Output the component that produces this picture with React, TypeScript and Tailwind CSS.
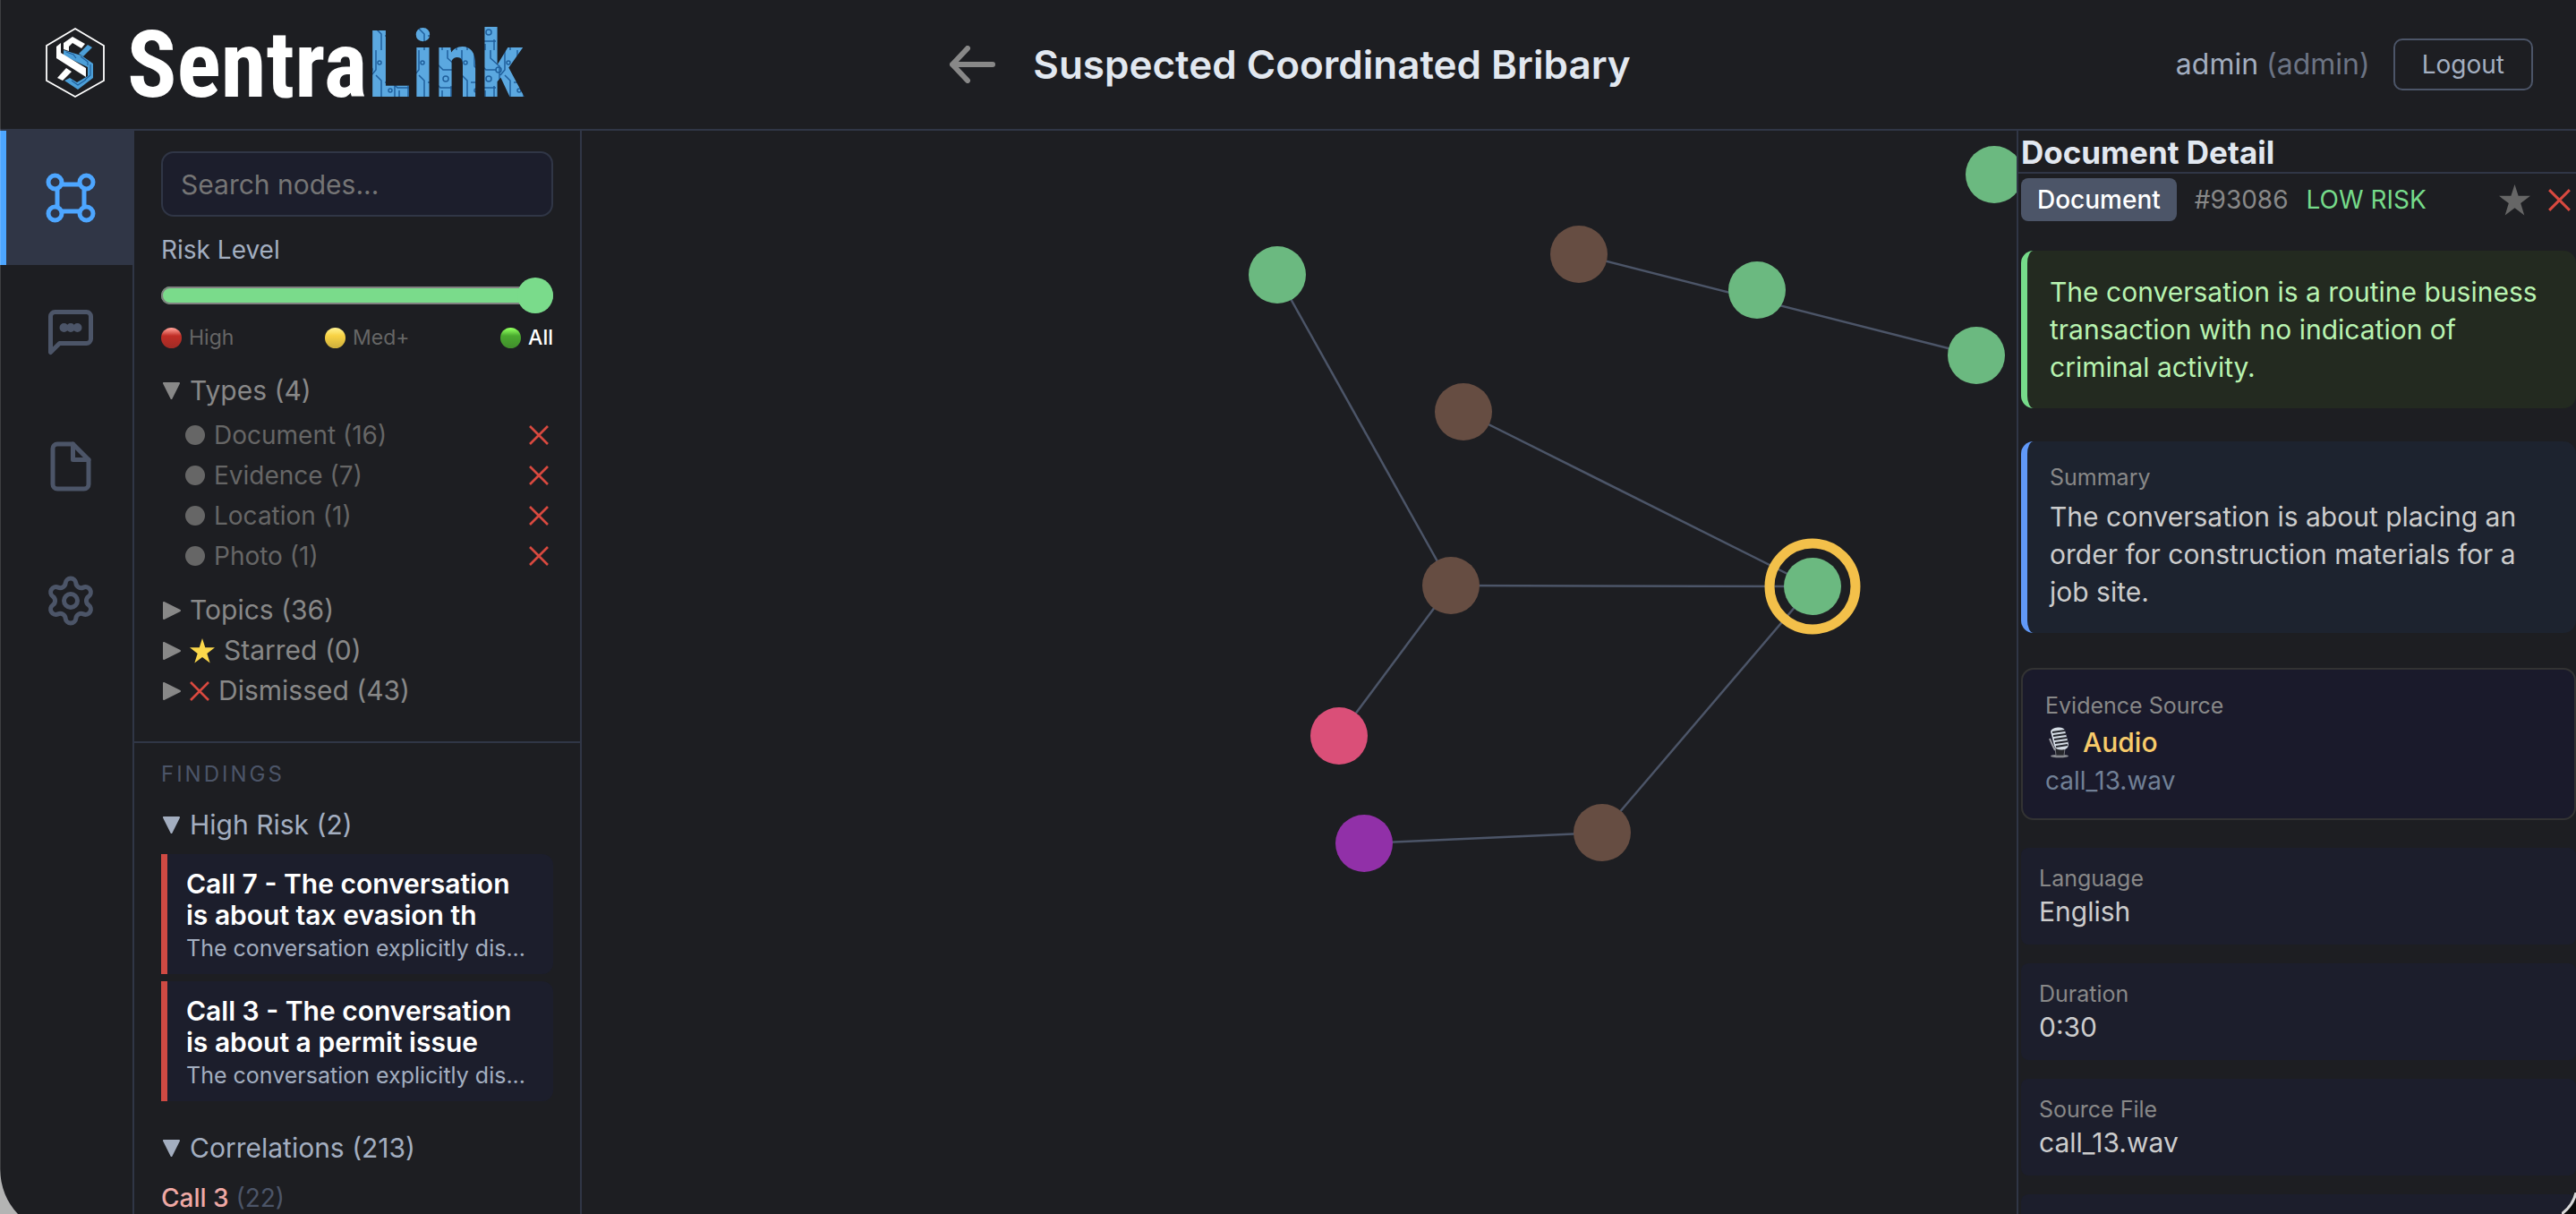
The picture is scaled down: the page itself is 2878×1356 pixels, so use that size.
import React, { useState } from "react";
import { Settings } from "lucide-react";

const NODE_COLORS = {
  document: "#6bb980",
  evidence: "#664d42",
  location: "#da4f78",
  photo: "#9130a8",
};

interface GraphNode {
  id: string;
  x: number;
  y: number;
  kind: keyof typeof NODE_COLORS;
}

const nodes: GraphNode[] = [
  { id: "d1", x: 777, y: 161, kind: "document" },
  { id: "d2", x: 1313, y: 178, kind: "document" },
  { id: "d3", x: 1558, y: 251, kind: "document" },
  { id: "d4", x: 1578, y: 49, kind: "document" },
  { id: "d5", x: 1375, y: 509, kind: "document" },
  { id: "e1", x: 1114, y: 138, kind: "evidence" },
  { id: "e2", x: 985, y: 314, kind: "evidence" },
  { id: "e3", x: 971, y: 508, kind: "evidence" },
  { id: "e4", x: 1140, y: 784, kind: "evidence" },
  { id: "l1", x: 846, y: 676, kind: "location" },
  { id: "p1", x: 874, y: 796, kind: "photo" },
];

const links = [
  ["d1", "e3"],
  ["e1", "d3"],
  ["e2", "d5"],
  ["e3", "d5"],
  ["e3", "l1"],
  ["e4", "d5"],
  ["p1", "e4"],
];

const types = [
  { name: "Document", count: 16 },
  { name: "Evidence", count: 7 },
  { name: "Location", count: 1 },
  { name: "Photo", count: 1 },
];

const findings = [
  {
    title: "Call 7 - The conversation is about tax evasion th",
    text: "The conversation explicitly dis...",
  },
  {
    title: "Call 3 - The conversation is about a permit issue",
    text: "The conversation explicitly dis...",
  },
];

const fields = [
  { label: "Language", value: "English" },
  { label: "Duration", value: "0:30" },
  { label: "Source File", value: "call_13.wav" },
];

function Logo() {
  return (
    <div className="flex items-center pb-1 pl-0.5">
      <svg className="h-[80px] w-[68px]" viewBox="0 0 68 80" fill="none">
        <path d="M34 2 66 21v39L34 78 2 60V21z" stroke="#fff" strokeWidth="1.800" />
        <path d="M21 25v-7l10-7 14 8-4 5-10-6-4 4v5z" fill="#fff" />
        <path d="M38 30l10-10 5 3-10 10z" fill="#4c9fd8" />
        <path d="M21 26l20 6 13 9v16L37 70 22 60l6-3 8 5 12-7V45L21 32z" fill="#4c9fd8" />
        <path d="M24 28l8 3 3 4M40 33l8 6v4M51 42v12l-6 5M30 60l7 5 9-6" stroke="#1f5f9c" strokeWidth="1.200" />
        <path d="M13 22l5-4v11l28 17v10L13 35z" fill="#fff" />
        <path d="M14 57l10-11 6 4-10 10z" fill="#fff" />
      </svg>
      <svg className="ml-6 h-[132px] w-[456px]" viewBox="0 0 456 132">
        <defs>
          <pattern id="circuit" width="48" height="52" patternUnits="userSpaceOnUse">
            <rect width="48" height="52" fill="#5ba8e0" />
            <g fill="none" stroke="#1f5f9c" strokeWidth="1.5">
              <path d="M4 0v18l7 7v27M9 0v14l8 8h12M22 0v9l10 9v34M38 0v22l-5 6M0 36h8l6 6h14M44 52V34l-6-6M26 52V40M16 52v-7" />
              <circle cx="31" cy="22" r="3" />
              <circle cx="20" cy="32" r="3" />
              <circle cx="42" cy="14" r="2" />
              <circle cx="6" cy="45" r="2" />
            </g>
          </pattern>
        </defs>
        <text
          x="0"
          y="104"
          fontSize="103"
          className="font-['Liberation_Sans_Narrow','Roboto_Condensed','Liberation_Sans',sans-serif] font-bold"
          fill="#fff"
        >
          Sentra<tspan fill="url(#circuit)">Link</tspan>
        </text>
      </svg>
    </div>
  );
}

function CrossIcon({ className }: { className: string }) {
  return (
    <svg className={className} viewBox="0 0 22 22" fill="none" stroke="#d9493f" strokeWidth="2.6">
      <path d="M1 1l20 20M21 1L1 21" />
    </svg>
  );
}

function StarIcon({ className }: { className: string }) {
  return (
    <svg className={className} viewBox="0 0 34 34" fill="currentColor">
      <path d="M17 0l4 12.5h13L23.500 20.500 27.500 33.500 17 25.500 6.500 33.500 10.500 20.500 0 12.500h13z" />
    </svg>
  );
}

function Ball({ id, top, bottom }: { id: string; top: string; bottom: string }) {
  return (
    <svg className="size-[23px]" viewBox="0 0 24 24">
      <defs>
        <linearGradient id={id} x1="0" y1="0" x2="0" y2="1">
          <stop offset="0.05" stopColor={top} />
          <stop offset="0.4" stopColor={bottom} />
          <stop offset="1" stopColor={bottom} stopOpacity="0.8" />
        </linearGradient>
      </defs>
      <circle cx="12" cy="12" r="12" fill={`url(#${id})`} />
    </svg>
  );
}

interface ToggleProps {
  label: string;
  open?: boolean;
  icon?: React.ReactNode;
  className?: string;
}

function Toggle({ label, open, icon, className = "text-[#888888]" }: ToggleProps) {
  return (
    <button className={`flex h-[45px] w-full items-center text-[30px] ${className}`}>
      <svg
        className="mr-2.5 ml-0.5 size-5"
        viewBox="0 0 20 20"
        fill="currentColor"
        stroke="currentColor"
        strokeWidth="2"
        strokeLinejoin="round"
      >
        {open ? <path d="M1 1h17l-8.500 17z" /> : <path d="M1 1v18l18-9z" />}
      </svg>
      {icon}
      {label}
    </button>
  );
}

interface NavButtonProps {
  label: string;
  active?: boolean;
  children: React.ReactNode;
}

function NavButton({ label, active, children }: NavButtonProps) {
  return (
    <button
      aria-label={label}
      className={`flex h-[150px] items-center justify-center border-l-[7px] ${
        active
          ? "-mr-0.5 border-[#4da6ff] bg-[#303646] text-[#4da6ff]"
          : "border-transparent pl-0.5 text-[#4c5568]"
      }`}
    >
      {children}
    </button>
  );
}

function NavIcon({ children }: { children: React.ReactNode }) {
  return (
    <svg
      className="size-[60px]"
      viewBox="0 0 24 24"
      fill="none"
      stroke="currentColor"
      strokeWidth="2"
      strokeLinecap="round"
      strokeLinejoin="round"
    >
      {children}
    </svg>
  );
}

function Sidebar() {
  return (
    <nav className="flex w-[150px] shrink-0 flex-col border-r-2 border-[#303646]">
      <NavButton label="Graph" active>
        <NavIcon>
          <circle cx="5" cy="5" r="3" />
          <circle cx="19" cy="5" r="3" />
          <circle cx="5" cy="19" r="3" />
          <circle cx="19" cy="19" r="3" />
          <path d="M8 6h8M8 18h8M6 8v8M18 8v8" />
        </NavIcon>
      </NavButton>
      <NavButton label="Chat">
        <NavIcon>
          <path d="M21 15a2 2 0 0 1-2 2H7l-4 4V5a2 2 0 0 1 2-2h14a2 2 0 0 1 2 2z" />
          <circle cx="9" cy="10" r="1" />
          <circle cx="12" cy="10" r="1" />
          <circle cx="15" cy="10" r="1" />
        </NavIcon>
      </NavButton>
      <NavButton label="Files">
        <NavIcon>
          <path d="M13 2H6a2 2 0 0 0-2 2v16a2 2 0 0 0 2 2h12a2 2 0 0 0 2-2V9z" />
          <path d="M13 2v7h7" />
        </NavIcon>
      </NavButton>
      <NavButton label="Settings">
        <Settings className="size-[60px]" />
      </NavButton>
    </nav>
  );
}

function FilterPanel() {
  const [search, setSearch] = useState("");
  const [risk, setRisk] = useState(2);

  return (
    <aside className="flex w-[500px] shrink-0 flex-col border-r-2 border-[#303646]">
      <div className="border-b-2 border-[#303646] px-[30px] pt-[23px] pb-[34px]">
        <input
          type="text"
          aria-label="Search nodes"
          placeholder="Search nodes..."
          value={search}
          onChange={(e) => setSearch(e.target.value)}
          className="h-[73px] w-full rounded-[14px] border-2 border-[#303646] bg-[#1c1e2c] px-5 text-[30px] text-gray-200 placeholder:text-[#757575]"
        />
        <label htmlFor="risk" className="mt-5 block text-[28px] leading-[34px] text-[#a3aec0]">
          Risk Level
        </label>
        <input
          id="risk"
          type="range"
          min={0}
          max={2}
          value={risk}
          onChange={(e) => setRisk(Number(e.target.value))}
          className="mt-6 block h-5 w-full appearance-none rounded-full bg-[#7adb8b] ring-2 ring-[#808080] ring-inset [&::-webkit-slider-thumb]:size-10 [&::-webkit-slider-thumb]:appearance-none [&::-webkit-slider-thumb]:rounded-full [&::-webkit-slider-thumb]:bg-[#7adb8b]"
        />
        <div className="mt-[22px] flex justify-between text-[23px] leading-[30px] text-[#666666]">
          <span className="flex items-center gap-2">
            <Ball id="red" top="#ff9a90" bottom="#c02e26" />
            High
          </span>
          <span className="flex items-center gap-2">
            <Ball id="yellow" top="#fff08a" bottom="#f8d243" />
            Med+
          </span>
          <span className="flex items-center gap-2 font-medium text-white">
            <Ball id="green" top="#8dff5c" bottom="#4aa92f" />
            All
          </span>
        </div>

        <div className="mt-[22px]">
          <Toggle label="Types (4)" open />
          <ul className="mt-1 mb-4 pr-[5px] pl-[27px] text-[28px] text-[#666666]">
            {types.map((type) => (
              <li key={type.name} className="flex h-[45px] items-center justify-between">
                <button className="flex items-center gap-2.5">
                  <span className="size-[22px] rounded-full bg-[#666666]" />
                  {type.name} ({type.count})
                </button>
                <button aria-label={`Hide ${type.name}`}>
                  <CrossIcon className="size-[22px]" />
                </button>
              </li>
            ))}
          </ul>
          <Toggle label="Topics (36)" />
          <Toggle
            label="Starred (0)"
            icon={<StarIcon className="mr-2.5 size-7 text-[#fbd84b]" />}
          />
          <Toggle label="Dismissed (43)" icon={<CrossIcon className="mr-2.5 size-[22px]" />} />
        </div>
      </div>

      <div className="px-[30px] pt-5">
        <h2 className="text-[24px] leading-[30px] tracking-[3px] text-[#4c5568]">FINDINGS</h2>
        <div className="mt-[19px]">
          <Toggle label="High Risk (2)" open className="text-[#a3aec0]" />
        </div>
        <div className="mt-2.5 flex flex-col gap-2">
          {findings.map((finding) => (
            <button
              key={finding.title}
              className="rounded-r-xl border-l-[7px] border-[#d04a43] bg-[#1c1e2c] pt-4 pr-6 pb-3.5 pl-[21px] text-left"
            >
              <span className="block text-[30px] leading-[35px] font-semibold text-white">
                {finding.title}
              </span>
              <span className="mt-1 block text-[25px] leading-[30px] whitespace-nowrap text-[#a3aec0]">
                {finding.text}
              </span>
            </button>
          ))}
        </div>
        <div className="mt-[30px]">
          <Toggle label="Correlations (213)" open className="text-[#a3aec0]" />
        </div>
        <p className="mt-4 text-[28px] leading-[34px] text-[#4c5568]">
          <span className="font-medium text-[#efa9a5]">Call 3</span> (22)
        </p>
      </div>
    </aside>
  );
}

function Graph() {
  const byId = (id: string) => nodes.find((n) => n.id === id)!;
  const selected = byId("d5");

  return (
    <main className="min-w-0 flex-1">
      <svg className="h-full w-full">
        {links.map(([from, to]) => (
          <line
            key={from + to}
            x1={byId(from).x}
            y1={byId(from).y}
            x2={byId(to).x}
            y2={byId(to).y}
            stroke="#4c5568"
            strokeWidth="2.500"
          />
        ))}
        <circle cx={selected.x} cy={selected.y} r="48" fill="none" stroke="#f3c04a" strokeWidth="11" />
        {nodes.map((n) => (
          <circle key={n.id} cx={n.x} cy={n.y} r="32" fill={NODE_COLORS[n.kind]} />
        ))}
      </svg>
    </main>
  );
}

function MicIcon() {
  return (
    <svg className="h-[36px] w-[32px]" viewBox="0 0 32 36" fill="none">
      <ellipse cx="16" cy="33.500" rx="10" ry="1.800" fill="#8a8c92" />
      <path d="M11 24l11 1-1 8h-9z" fill="#26272c" stroke="#77797f" />
      <path d="M6 6Q7 2 14 1.500 21 1 22 5l4 15q0 6-7 6.500T10 22z" fill="#d4dbe4" />
      <path d="M8 7l14-2M9 11l14-2M10 15l14-2M11 19l14-2M12 23l13-2" stroke="#23252c" strokeWidth="1.800" />
      <path d="M5 14l3 7 3 6" stroke="#9a9ca4" strokeWidth="2" />
    </svg>
  );
}

function DetailPanel() {
  return (
    <aside className="flex w-[625px] shrink-0 flex-col border-l-2 border-[#303646]">
      <h2 className="border-b-2 border-[#303646] pt-0.5 pl-[3px] text-[35px] leading-[44px] font-bold text-[#e2e8f0]">
        Document Detail
      </h2>
      <div className="pl-[3px]">
        <div className="mt-[5px] flex h-12 items-center text-[28px]">
          <span className="flex h-12 items-center rounded-lg bg-[#4c5568] px-[18px] font-medium text-white">
            Document
          </span>
          <span className="ml-5 text-[#888888]">#93086</span>
          <span className="ml-5 text-[#76db8a]">LOW RISK</span>
          <button aria-label="Star" className="ml-auto text-[#666666]">
            <StarIcon className="size-[35px]" />
          </button>
          <button aria-label="Dismiss" className="mr-1.5 ml-5">
            <CrossIcon className="size-[25px]" />
          </button>
        </div>

        <p className="mt-[33px] rounded-[14px] border-l-[7px] border-[#76db8a] bg-[#232a20] p-[25px] text-[30px] leading-[42px] text-[#b8f3b0]">
          The conversation is a routine business transaction with no indication of criminal activity.
        </p>

        <div className="mt-[37px] rounded-[14px] border-l-[7px] border-[#6199f8] bg-[#1d232f] p-[25px]">
          <h3 className="text-[25px] leading-[30px] text-[#888888]">Summary</h3>
          <p className="mt-2 text-[30px] leading-[42px] text-[#cccccc]">
            The conversation is about placing an order for construction materials for a job site.
          </p>
        </div>

        <div className="mt-[39px] rounded-[14px] border-2 border-[#333333] bg-[#1a1a2b] p-[25px]">
          <h3 className="text-[25px] leading-[30px] text-[#888888]">Evidence Source</h3>
          <p className="mt-2 flex items-center gap-2.5 text-[30px] leading-9 font-medium text-[#f8cb6a]">
            <MicIcon />
            Audio
          </p>
          <p className="mt-2 text-[28px] leading-[34px] text-[#718096]">call_13.wav</p>
        </div>

        <dl className="mt-[31px] flex flex-col gap-[21px]">
          {fields.map((field) => (
            <div key={field.label} className="rounded-lg bg-[#1c1e2c] px-5 py-[19px]">
              <dt className="text-[25px] leading-[30px] text-[#888888]">{field.label}</dt>
              <dd className="mt-1 text-[30px] leading-9 text-[#cccccc]">{field.value}</dd>
            </div>
          ))}
        </dl>
        <div className="mt-[21px] h-[108px] rounded-lg bg-[#1c1e2c]" />
      </div>
    </aside>
  );
}

export default function App() {
  return (
    <div className="relative flex h-screen flex-col overflow-hidden bg-[#1d1e22] font-['Inter',sans-serif]">
      <header className="flex h-[146px] shrink-0 items-center border-b-2 border-[#303646] px-12">
        <div className="flex-1">
          <Logo />
        </div>
        <div className="flex items-center gap-[42px] pl-1">
          <button aria-label="Back">
            <svg
              className="h-[42px] w-[52px]"
              viewBox="0 0 52 42"
              fill="none"
              stroke="#888888"
              strokeWidth="6"
              strokeLinecap="round"
              strokeLinejoin="round"
            >
              <path d="M49 21H4M21 3L4 21l17 18" />
            </svg>
          </button>
          <h1 className="text-[44px] font-semibold text-[#e2e8f0]">Suspected Coordinated Bribary</h1>
        </div>
        <div className="flex flex-1 items-center justify-end gap-[26px]">
          <span className="text-[32px] text-[#6c7484]">
            <span className="text-[#a3aec0]">admin</span> (admin)
          </span>
          <button className="h-[58px] rounded-[10px] border-2 border-[#4c5568] px-[30px] text-[28px] text-[#a3aec0]">
            Logout
          </button>
        </div>
      </header>

      <div className="flex min-h-0 flex-1">
        <Sidebar />
        <FilterPanel />
        <Graph />
        <DetailPanel />
      </div>

      {/* window edge and rounded bottom corners */}
      <div className="absolute inset-y-0 left-0 w-px bg-white/15" />
      <svg className="absolute bottom-0 left-0 h-[50px] w-5" viewBox="0 0 20 50">
        <path d="M0 0q1 30 20 50H0z" fill="#b4b4b4" />
      </svg>
      <svg className="absolute right-0 bottom-0 h-6 w-4" viewBox="0 0 16 24">
        <path d="M16 0Q13 14 0 24h16z" fill="#0a0a0a" />
        <path d="M16 0Q13 14 0 24" fill="none" stroke="#d8d8d8" strokeWidth="3" />
      </svg>
    </div>
  );
}
